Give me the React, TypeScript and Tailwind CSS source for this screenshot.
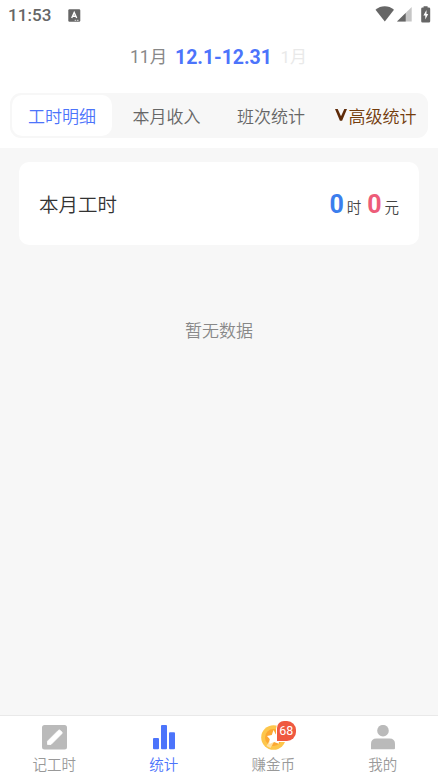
import clsx from 'clsx';

const TABS = ['工时明细', '本月收入', '班次统计', '高级统计'];

function StatusBar() {
  return (
    <div className="flex h-[30px] shrink-0 items-center pl-2 pr-[7px] text-[#666]">
      <span className="text-[17px] font-medium leading-none tracking-[0.1px]">11:53</span>
      <svg className="ml-4" width="13" height="13" viewBox="0 0 13 13">
        <rect x="0.3" y="0.3" width="12" height="12.4" rx="1.2" fill="#666" />
        <path d="M3.7 9 6.2 3.4 8.7 9M4.7 7.2h3" fill="none" stroke="#fff" strokeWidth="1.4" />
        <path d="M6.7 11.3h1.5M9 11.3h1.5" stroke="#fff" strokeWidth="0.8" />
      </svg>
      <svg className="relative -top-px ml-auto" width="20" height="16" viewBox="0 0 20 16">
        <path d="M0.5 3.8C6-0.8 13.5-0.8 19 3.8L9.8 15.5Z" fill="#666" />
      </svg>
      <svg className="relative -top-px ml-[2px]" width="15" height="16" viewBox="0 0 15 16">
        <path d="M0 15.5 14.7 1v14.5Z" fill="#c6c6c6" />
        <path d="M0 15.5 8.7 7v8.5Z" fill="#666" />
      </svg>
      <svg className="relative -top-px ml-[9px]" width="10" height="17" viewBox="0 0 10 17">
        <path d="M2.6 1.4V.2h4v1.2h1.2Q9.2 1.4 9.2 2.8v12.4q0 1.3-1.3 1.3H1.5Q.2 16.5.2 15.2V2.8Q.2 1.4 1.6 1.4Z" fill="#666" />
        <path d="M5.5 4 2.4 9.4h1.9v4.1L7.2 8H5.5Z" fill="#fff" />
      </svg>
    </div>
  );
}

function MonthPicker() {
  return (
    <div className="flex h-[63px] items-start whitespace-nowrap pl-[130px] pt-[14px] leading-[27px]">
      <span className="w-[45px] text-[17.5px] text-[#888]">11月</span>
      <span className="w-[105.5px] text-[19.5px] font-bold tracking-[-0.05px] text-[#4c74fb]">12.1-12.31</span>
      <span className="text-[17px] text-[#e9e9e9]">1月</span>
    </div>
  );
}

function Tabs() {
  return (
    <div className="mx-[10px] flex h-[45px] rounded-[11px] bg-[#f7f7f7] py-0.5">
      {TABS.map((tab, i) => (
        <div key={tab} className="flex flex-1 pl-0.5 pr-[2.5px]">
          <button
            className={clsx(
              'flex flex-1 items-center justify-center whitespace-nowrap rounded-[10px] pt-[4px] text-[17px] font-[350]',
              i === 0 && 'bg-white text-[#4c74fb]',
              (i === 1 || i === 2) && 'text-[#666]',
              i === 3 && 'text-[#733c0b]',
            )}
          >
            {i === 3 && (
              <svg className="relative -top-[2.5px] mr-[2px] shrink-0" width="12" height="12" viewBox="0 0 12 12">
                <path d="M0 0h2.7L6 7.2 9.3 0H12L7.1 11.7H4.9Z" fill="#5e2b09" />
              </svg>
            )}
            {tab}
          </button>
        </div>
      ))}
    </div>
  );
}

function CoinIcon() {
  return (
    <div className="relative h-[25px] w-[25px]">
      <svg width="25" height="25" viewBox="0 0 25 25">
        <circle cx="12.5" cy="12.5" r="12.3" fill="#fdc64b" />
        <circle cx="12.5" cy="12.5" r="8.5" fill="#fca832" />
        <path d="m5.5 21 4-7 4 2-4 7Z" fill="#ffe0a3" />
        <path d="m12.5 5 2.2 4.3 6.3 1-3.5 4 .5 4.4-5-1.7-4.6 2 .3-4.9L6 11l4.8-1Z" fill="#fff" />
      </svg>
      <span className="absolute -top-1 left-4 flex h-5 w-[19px] items-center justify-center rounded-[9px] rounded-bl-none rounded-tl-[7px] bg-[#ef5940] text-[12.5px] leading-none text-white shadow-[-1px_1px_0_#fff]">
        68
      </span>
    </div>
  );
}

const NAV = [
  {
    label: '记工时',
    icon: (
      <svg width="25" height="25" viewBox="0 0 25 25">
        <rect width="25" height="24.5" rx="2.5" fill="#bababa" />
        <path d="M5.5 16.2 16.3 5.4q1-1 2 0l1.5 1.5q.9.9 0 1.8L9 19.5H5.5Z" fill="#fff" stroke="#fff" strokeWidth="0.8" strokeLinejoin="round" />
      </svg>
    ),
  },
  {
    label: '统计',
    icon: (
      <svg width="25" height="25" viewBox="0 0 25 25" fill="#4c74fb">
        <rect x="2" y="13" width="6" height="11.3" rx="1" />
        <rect x="10" y="0" width="6" height="24.3" rx="1" />
        <rect x="18" y="7.3" width="6" height="17" rx="1" />
      </svg>
    ),
  },
  { label: '赚金币', icon: <CoinIcon /> },
  {
    label: '我的',
    icon: (
      <svg width="25" height="25" viewBox="0 0 25 25" fill="#bababa">
        <circle cx="13" cy="5.7" r="5.8" />
        <path d="M1 24.3V19q0-5.5 5.5-5.5h13q5.5 0 5.5 5.5v4.3q0 1-1 1Z" />
      </svg>
    ),
  },
];

export default function App() {
  return (
    <div className="flex h-[780px] w-[438px] flex-col overflow-hidden bg-[#f7f7f7] font-[Roboto,'Noto_Sans_CJK_SC',sans-serif]">
      <header className="h-[148px] shrink-0 bg-white">
        <StatusBar />
        <MonthPicker />
        <Tabs />
      </header>

      <main className="flex-1 px-[19.4px] pt-[14px]">
        <section className="flex h-[83px] items-center justify-between rounded-[10px] bg-white px-[19.5px] pt-[3px]">
          <h2 className="relative top-px text-[19.5px] font-[350] text-[#333]">本月工时</h2>
          <div className="flex items-baseline text-[14.5px] font-[350] text-[#444]">
            <span className="mr-[3px] text-[25px] font-bold text-[#3b7eed]">0</span>时
            <span className="ml-[6px] mr-[3px] text-[25px] font-bold text-[#ed5c79]">0</span>元
          </div>
        </section>
        <p className="mt-[74px] text-center text-[17px] font-[350] leading-[25px] text-[#888]">暂无数据</p>
      </main>

      <nav className="flex h-[65px] shrink-0 border-t border-[#e9e9e9] bg-white">
        {NAV.map((item, i) => (
          <div key={item.label} className="flex flex-1 flex-col items-center pr-px pt-[9px]">
            {item.icon}
            <span className={clsx('mt-[5px] text-[14.5px] font-[350] leading-[21px]', i === 1 ? 'text-[#4c74fb]' : 'text-[#999]')}>
              {item.label}
            </span>
          </div>
        ))}
      </nav>
    </div>
  );
}
